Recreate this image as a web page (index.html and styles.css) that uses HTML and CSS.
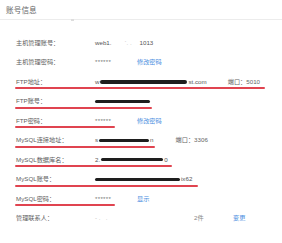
FILE: index.html
```html
<!DOCTYPE html>
<html lang="zh">
<head>
<meta charset="utf-8">
<title>账号信息</title>
<link rel="stylesheet" href="styles.css">
</head>
<body>
<div class="page">
  <div class="header">
    <span class="title">账号信息</span>
    <span class="caret"></span>
  </div>
  <div class="list">
    <div class="row">
      <span class="label">主机管理账号：</span>
      <span class="value">web1.<span class="faint gap">`.&nbsp;.</span>1013</span>
    </div>
    <div class="row">
      <span class="label">主机管理密码：</span>
      <span class="value pw">******</span>
      <a class="link">修改密码</a>
    </div>
    <div class="row">
      <span class="label">FTP地址：</span>
      <span class="value">w<span class="redact r-ftp-host"></span>st.com</span>
      <span class="port port-ftp">端口：5010</span>
      <span class="mark m-ftp-host"></span>
    </div>
    <div class="row">
      <span class="label">FTP账号：</span>
      <span class="value"><span class="redact r-ftp-user"></span></span>
      <span class="mark m-ftp-user"></span>
    </div>
    <div class="row">
      <span class="label">FTP密码：</span>
      <span class="value pw">******</span>
      <a class="link">修改密码</a>
      <span class="mark m-ftp-pw"></span>
    </div>
    <div class="row">
      <span class="label">MySQL连接地址：</span>
      <span class="value">s<span class="redact r-my-host"></span>n</span>
      <span class="port port-my">端口：3306</span>
      <span class="mark m-my-host"></span>
    </div>
    <div class="row">
      <span class="label">MySQL数据库名：</span>
      <span class="value">2.<span class="redact r-my-db"></span>0</span>
      <span class="mark m-my-db"></span>
    </div>
    <div class="row">
      <span class="label">MySQL账号：</span>
      <span class="value"><span class="redact r-my-user"></span>ix62</span>
      <span class="mark m-my-user"></span>
    </div>
    <div class="row">
      <span class="label">MySQL密码：</span>
      <span class="value pw">******</span>
      <a class="link">显示</a>
      <span class="mark m-my-pw"></span>
    </div>
    <div class="row">
      <span class="label">管理联系人：</span>
      <span class="value faint contact">- .&nbsp;&nbsp;&nbsp;.</span>
      <span class="value extra">2件</span>
      <a class="link change">变更</a>
    </div>
  </div>
</div>
</body>
</html>
```

FILE: styles.css
```css
html, body {
  margin: 0;
  padding: 0;
  background: #ffffff;
}

body {
  font-family: "Liberation Sans", "Noto Sans CJK SC", sans-serif;
  color: #555555;
}

.page {
  width: 282px;
  height: 243px;
  overflow: hidden;
}

.header {
  position: relative;
  height: 20px;
  display: flex;
  align-items: center;
  padding-left: 6px;
  border-bottom: 1px solid #ececec;
  box-sizing: border-box;
}

.title {
  font-size: 7.6px;
  color: #666666;
  letter-spacing: 0.1px;
}

.caret {
  position: absolute;
  left: 71px;
  bottom: -2px;
  width: 3px;
  height: 2px;
  background: #dddddd;
}

.list {
  padding-top: 13px;
}

.row {
  position: relative;
  height: 19.5px;
  display: flex;
  align-items: center;
  font-size: 6.2px;
  line-height: 8px;
  white-space: nowrap;
}

.label {
  width: 79px;
  padding-left: 16px;
  box-sizing: border-box;
  flex: none;
  color: #5e5e5e;
}

.value {
  display: inline-flex;
  align-items: center;
  padding-left: 16px;
  color: #555555;
}

.gap {
  display: inline-block;
  width: 28px;
  padding-left: 13px;
  box-sizing: border-box;
}

.pw {
  width: 58px;
  letter-spacing: 0.3px;
  color: #777777;
  box-sizing: border-box;
}

.faint {
  color: #bbbbbb;
}

.link {
  color: #4a8ee0;
  cursor: pointer;
}

.port {
  color: #666666;
}

.port-ftp {
  margin-left: 21px;
}

.port-my {
  margin-left: 22px;
}

.contact {
  width: 115px;
  box-sizing: border-box;
}

.extra {
  padding-left: 0;
  width: 39px;
  color: #888888;
}

.redact {
  display: inline-block;
  height: 3px;
  border-radius: 2px;
  background: #1e1e1e;
  margin: 0 1px;
}

.r-ftp-host { width: 87px; height: 3.5px; }
.r-ftp-user { width: 55px; margin-left: 0; }
.r-my-host { width: 50px; }
.r-my-db { width: 62px; }
.r-my-user { width: 85px; margin-left: 0; }

.mark {
  position: absolute;
  left: 15px;
  top: 15px;
  height: 2px;
  border-radius: 1px;
  background: #e04450;
}

.m-ftp-host { width: 250px; }
.m-ftp-user { width: 137px; }
.m-ftp-pw { width: 100px; }
.m-my-host { width: 140px; }
.m-my-db { width: 157px; }
.m-my-user { width: 183px; }
.m-my-pw { width: 100px; }
```
